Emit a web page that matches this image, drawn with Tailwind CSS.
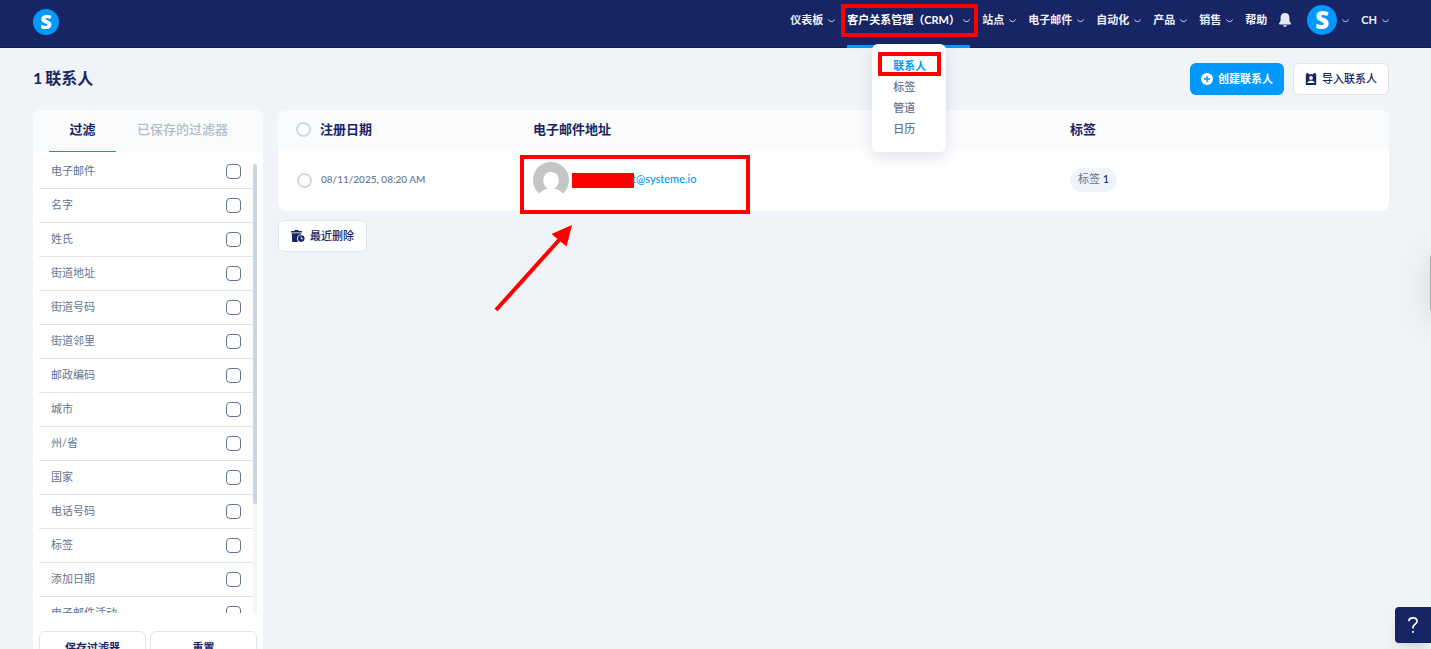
<!DOCTYPE html>
<html lang="zh">
<head>
  <meta charset="UTF-8">
  <meta name="viewport" content="width=device-width, initial-scale=1.0">
  <title>联系人</title>
  <script src="https://cdn.jsdelivr.net/npm/@tailwindcss/browser@4"></script>
</head>
<body class="h-screen overflow-hidden bg-[#f0f3f8] font-['Lato','Noto_Sans_CJK_SC',sans-serif] text-[11px] leading-4 text-[#182564]">
  <svg class="hidden">
    <symbol id="chevron" viewBox="0 0 7 4">
      <path d="M.6 .8C1.800 3.300 5.200 3.300 6.400 .8" fill="none" stroke="currentColor" stroke-width=".9" stroke-linecap="round"/>
    </symbol>
  </svg>

  <!-- Top bar -->
  <header class="flex h-12 justify-between border-b border-[#101b54] bg-[#182564] pl-[33px] pr-[42px] text-[#eef1f8]">
    <a href="#" class="mt-[9px] flex size-[26px] items-center justify-center rounded-full bg-[#0099ff] font-['Open_Sans'] text-xl font-extrabold text-white">S</a>
    <nav class="flex h-10 items-center gap-3 font-bold">
      <a href="#" class="flex items-center gap-[5px]">仪表板 <svg class="mt-0.5 h-1 w-[7px]"><use href="#chevron"/></svg></a>

      <div class="relative flex h-10 w-[123px] items-center">
        <a href="#" class="flex w-full items-center justify-between whitespace-nowrap text-white">客户关系管理（CRM）<svg class="mt-0.5 h-1 w-[7px]"><use href="#chevron"/></svg></a>
        <div class="absolute inset-x-0 top-[45px] h-[3px] bg-[#0099ff]"></div>
        <div class="absolute -left-1.5 -right-2 top-1 h-[33px] border-4 border-[#ff0000]"></div>
        <!-- Dropdown -->
        <ul class="absolute left-[25px] top-11 z-10 h-[108px] w-[74px] rounded-md bg-white pl-[21px] pt-[11px] leading-[21px] font-medium text-[#64748f] shadow-[0_6px_14px_rgba(24,37,100,0.12)]">
          <li class="relative">
            <a href="#" class="font-bold text-[#0099ff]">联系人</a>
            <div class="absolute -left-[15px] -top-[3px] h-6 w-[63px] border-4 border-[#ff0000]"></div>
          </li>
          <li><a href="#">标签</a></li>
          <li><a href="#">管道</a></li>
          <li><a href="#">日历</a></li>
        </ul>
      </div>

      <a href="#" class="flex items-center gap-[5px]">站点 <svg class="mt-0.5 h-1 w-[7px]"><use href="#chevron"/></svg></a>
      <a href="#" class="flex items-center gap-[5px]">电子邮件 <svg class="mt-0.5 h-1 w-[7px]"><use href="#chevron"/></svg></a>
      <a href="#" class="flex items-center gap-[5px]">自动化 <svg class="mt-0.5 h-1 w-[7px]"><use href="#chevron"/></svg></a>
      <a href="#" class="flex items-center gap-[5px]">产品 <svg class="mt-0.5 h-1 w-[7px]"><use href="#chevron"/></svg></a>
      <a href="#" class="flex items-center gap-[5px]">销售 <svg class="mt-0.5 h-1 w-[7px]"><use href="#chevron"/></svg></a>
      <a href="#">帮助</a>
      <button type="button" aria-label="通知" class="mr-1">
        <svg class="h-[14px] w-3" viewBox="0 0 12 14" fill="#e6e9ef"><path d="M6 0C3.2 0 1.6 2 1.6 4.6V7.6C1.6 8.8 0 9.8 0 10.8C0 11.3 .3 11.6 .8 11.6H11.2C11.7 11.6 12 11.3 12 10.8C12 9.8 10.4 8.8 10.4 7.6V4.6C10.4 2 8.8 0 6 0ZM4 12.2C4.3 13.3 5 13.8 6 13.8S7.7 13.3 8 12.2Z"/></svg>
      </button>
      <button type="button" class="flex items-center gap-[5px]">
        <span class="flex size-[30px] items-center justify-center rounded-full bg-[#0099ff] font-['Open_Sans'] text-2xl font-extrabold text-white">S</span>
        <svg class="mt-0.5 h-1 w-[7px]"><use href="#chevron"/></svg>
      </button>
      <button type="button" class="flex items-center gap-[5px]">CH <svg class="mt-0.5 h-1 w-[7px]"><use href="#chevron"/></svg></button>
    </nav>
  </header>

  <main class="pl-[33px] pr-[42px]">
    <div class="flex h-[62px] items-center justify-between">
      <h1 class="flex gap-[3px] pb-0.5 text-base font-bold"><span>1</span>联系人</h1>
      <div class="flex gap-[9px] font-bold">
        <button type="button" class="flex h-8 items-center gap-[5px] rounded-md bg-[#0099ff] px-[11px] text-white">
          <svg class="size-3" viewBox="0 0 12 12"><circle cx="6" cy="6" r="6" fill="#fff"/><path d="M6 3V9M3 6H9" stroke="#0099ff" stroke-width="1.5"/></svg>
          创建联系人
        </button>
        <button type="button" class="flex h-8 items-center gap-[5px] rounded-md border border-[#dfe4e8] bg-white px-[11px] font-medium">
          <svg class="size-3" viewBox="0 0 12 12"><path fill="#182564" fill-rule="evenodd" d="M1.400 0H3.400V1.200H8.600V0H10.600V1.200H11.200V12H.8V1.200H1.400ZM6 3A1.900 1.900 0 1 0 6 6.800A1.900 1.900 0 1 0 6 3ZM2.500 10.100H9.500V9.500C9.500 8.300 7.200 7.700 6 7.700S2.500 8.300 2.500 9.500Z"/></svg>
          导入联系人
        </button>
      </div>
    </div>

    <div class="flex items-start gap-[15px]">
      <!-- Filters -->
      <aside class="w-[230px] shrink-0 overflow-hidden rounded-lg bg-white pb-4">
        <div class="flex h-[42px] bg-[#fafbfd] pl-4 text-[13px] leading-[37px]">
          <button type="button" class="w-[67px] border-b border-[#0b8ff0] pb-0.5 font-bold">过滤</button>
          <button type="button" class="pb-[3px] pl-[21px] font-medium text-[#b3bccb]">已保存的过滤器</button>
        </div>
        <div class="flex h-[461px] overflow-hidden px-1.5 text-[#64748f]">
          <div id="filters" class="grow pt-[3px]"></div>
          <div class="mt-3 w-1 shrink-0 rounded-full bg-[#f4f5f6]">
            <div class="h-[340px] rounded-full bg-[#cad5e2]"></div>
          </div>
        </div>
        <div class="mt-[18px] flex gap-1 px-1.5 font-bold">
          <button type="button" class="h-[34px] grow basis-0 rounded-md border border-[#dfe6e8]">保存过滤器</button>
          <button type="button" class="h-[34px] grow basis-0 rounded-md border border-[#dfe6e8]">重置</button>
        </div>
      </aside>

      <!-- Contacts -->
      <section class="grow">
        <div class="rounded-lg bg-white">
          <table class="w-full table-fixed text-left">
            <thead class="text-[13px]">
              <tr class="h-[39px] bg-[#fafbfd]">
                <th class="w-[255px] rounded-tl-lg pl-[18px] font-bold">
                  <label class="flex items-center gap-[9px]"><input type="checkbox" class="size-[15px] appearance-none rounded-full border-2 border-[#cdd9e6] bg-white"><span class="pb-0.5">注册日期</span></label>
                </th>
                <th class="pb-0.5 font-bold">电子邮件地址</th>
                <th class="w-[319px] rounded-tr-lg pb-0.5 font-bold">标签</th>
              </tr>
            </thead>
            <tbody>
              <tr class="h-[62px] text-[#64748f]">
                <td class="pl-[19px]">
                  <label class="flex items-center gap-[9px]"><input type="checkbox" class="size-[15px] appearance-none rounded-full border-2 border-[#cdd9e6] bg-white"><span class="pb-0.5 text-[10px] font-medium">08/11/2025, 08:20 AM</span></label>
                </td>
                <td>
                  <div class="relative flex items-center gap-[3px]">
                    <svg class="size-9" viewBox="0 0 36 36"><circle cx="18" cy="18" r="18" fill="#c5c5c5"/><ellipse cx="18" cy="18.5" rx="7.8" ry="8.8" fill="#fff"/><path d="M6 32C9 28 13 27 15 26.500H21C23 27 27 28 30 32V36H6Z" fill="#fff"/></svg>
                    <a href="#" class="order-2 -ml-[5px] pb-0.5 font-medium text-[#0099ff]">t@systeme.io</a>
                    <span class="relative order-1 h-[15px] w-[62px] bg-[#ff0000]"></span>
                    <div class="absolute -left-[13px] -top-[7px] h-[59px] w-[230px] border-4 border-[#ff0000]"></div>
                    <svg class="absolute -left-[39px] top-[62px] h-[88px] w-[78px]" viewBox="0 0 78 88"><path d="M2 86L66 15" stroke="#ff0000" stroke-width="4"/><path d="M78 1L57.500 10L72.500 22.500Z" fill="#ff0000"/></svg>
                  </div>
                </td>
                <td><span class="inline-block h-6 rounded-full bg-[#f0f3f9] px-2 leading-[22px]">标签 <span class="font-medium text-[#182564]">1</span></span></td>
              </tr>
            </tbody>
          </table>
        </div>
        <button type="button" class="mt-[9px] flex h-8 items-center gap-[5px] rounded-md border border-[#dfe6e8] bg-white px-3 font-medium">
          <svg class="h-3 w-[14px]" viewBox="0 0 14 12"><path fill="#182564" d="M0 1H3L4 0H7L8 1H11V2.500H0ZM.8 3.300H10.200V4.500C7.500 4.500 6 6.500 6 8.400C6 9.900 6.600 11.200 7.500 12H2.200C1.500 12 1.100 11.500 1.100 11Z"/><circle cx="10.200" cy="8.600" r="3.300" fill="#182564"/><path d="M10.200 6.600V8.700H12" fill="none" stroke="#fff" stroke-width=".9"/></svg>
          最近删除
        </button>
      </section>
    </div>
  </main>

  <!-- Side panel handle -->
  <div class="fixed -right-[59px] top-[254px] h-[58px] w-[60px] rounded bg-[#a9abae] shadow-[0_6px_32px_rgba(0,0,0,0.12)]"></div>

  <button type="button" aria-label="帮助" class="fixed bottom-1.5 right-0 flex size-9 items-center justify-center rounded-l bg-[#182564] text-white shadow-lg">
    <svg class="h-4 w-[10px]" viewBox="0 0 10 16"><path d="M.9 4.300C.9 2 2.600 .9 5 .9S9.100 2.200 9.100 4.300C9.100 7 5 7.300 5 10.500V11.500" fill="none" stroke="#fff" stroke-width="1.700"/><rect x="4.100" y="14" width="1.800" height="1.800" fill="#fff"/></svg>
  </button>

  <script>
    const filters = ['电子邮件', '名字', '姓氏', '街道地址', '街道号码', '街道邻里', '邮政编码', '城市', '州/省', '国家', '电话号码', '标签', '添加日期', '电子邮件活动'];
    document.getElementById('filters').innerHTML = filters.map(name => `
      <label class="flex h-[34px] justify-between border-b border-[#dfe4e6] px-3 pt-[9px]">
        <span class="-mt-px">${name}</span>
        <input type="checkbox" class="size-[15px] appearance-none rounded border border-[#64748f]">
      </label>`).join('');
  </script>
</body>
</html>
